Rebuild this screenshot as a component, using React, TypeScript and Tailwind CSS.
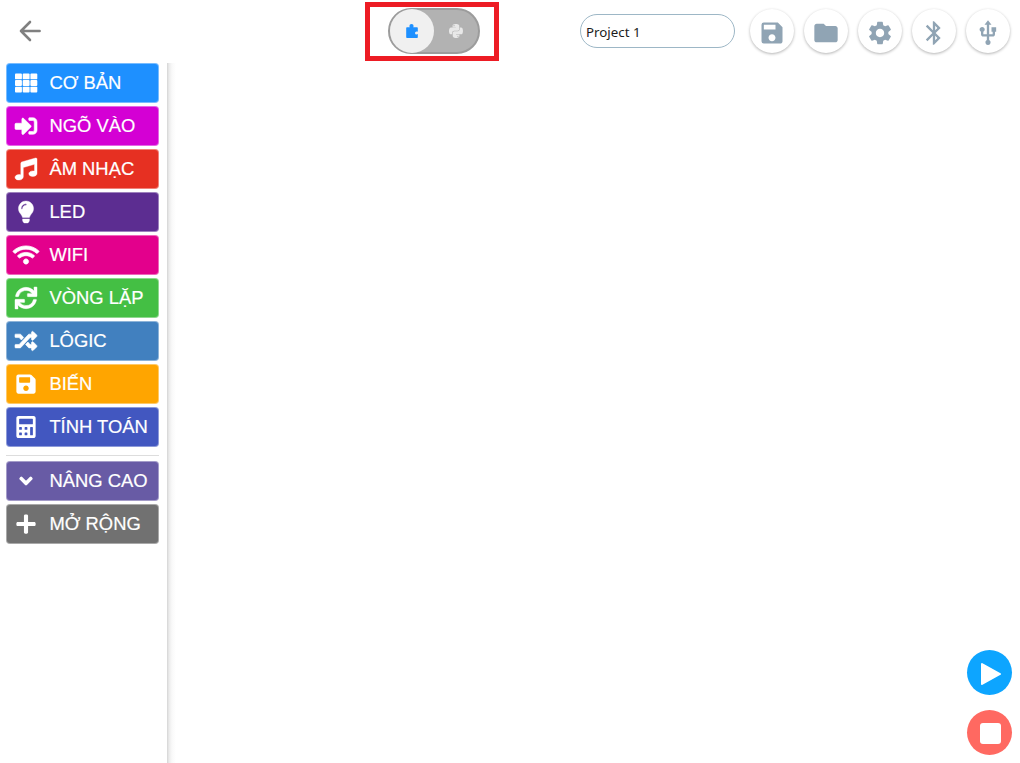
import React from "react";
import type { IconType } from "react-icons";
import {
  FaCalculator,
  FaChevronDown,
  FaLightbulb,
  FaPlus,
  FaPython,
  FaRandom,
  FaSave,
  FaSignInAlt,
  FaSync,
  FaWifi,
} from "react-icons/fa";
import { MdBluetooth, MdFolder, MdSave, MdSettings, MdUsb } from "react-icons/md";

type Icon = IconType | ((props: { className?: string }) => React.ReactElement);
type Category = { label: string; icon: Icon; color: string; size: string };

function GridIcon({ className }: { className?: string }) {
  return (
    <svg viewBox="0 0 22 22" className={className} fill="currentColor">
      {[1.5, 8.1, 14.7].map((y) =>
        [0, 7.7, 15.4].map((x) => <rect key={`${x}-${y}`} x={x} y={y} width="6.9" height="5.8" rx="0.9" />),
      )}
    </svg>
  );
}

function MusicIcon({ className }: { className?: string }) {
  return (
    <svg viewBox="0 0 22 22" className={className} fill="currentColor" stroke="currentColor" strokeWidth="0.4">
      <path d="M5.8 5.2c0-.6.4-1 .9-1.2L20.5 0c.8-.2 1.5.3 1.5 1.1v14.3c0 1.9-1.9 3-4.2 3s-4-1-4-2.6c0-1.7 1.9-2.9 4.2-2.9.6 0 .9.1 1.5.2V6.300L8.300 9.500v9.300c0 1.900-1.900 3.200-4.200 3.200S0 21 0 19.400c0-1.700 1.900-2.900 4.200-2.900.6 0 1.100.1 1.600.3Z" />
    </svg>
  );
}

const categories: Category[] = [
  { label: "CƠ BẢN", icon: GridIcon, color: "bg-[#1e90ff]", size: "size-[22px]" },
  { label: "NGÕ VÀO", icon: FaSignInAlt, color: "bg-[#d400d4]", size: "size-[22px] [stroke-width:14]" },
  { label: "ÂM NHẠC", icon: MusicIcon, color: "bg-[#e63022]", size: "size-[22px]" },
  { label: "LED", icon: FaLightbulb, color: "bg-[#5c2d91]", size: "size-[22px] [stroke-width:8]" },
  { label: "WIFI", icon: FaWifi, color: "bg-[#e3008c]", size: "size-[26px] [stroke-width:18]" },
  { label: "VÒNG LẶP", icon: FaSync, color: "bg-[#44bf44]", size: "size-[22px] [stroke-width:10]" },
  { label: "LÔGIC", icon: FaRandom, color: "bg-[#4180bf]", size: "size-[22px] [stroke-width:14]" },
  { label: "BIẾN", icon: FaSave, color: "bg-[#ffa500]", size: "size-[22px] [stroke-width:0]" },
  { label: "TÍNH TOÁN", icon: FaCalculator, color: "bg-[#4257c0]", size: "size-[22px] [stroke-width:0]" },
];

const extras: Category[] = [
  { label: "NÂNG CAO", icon: FaChevronDown, color: "bg-[#685ba5]", size: "size-[14px] [stroke-width:50]" },
  { label: "MỞ RỘNG", icon: FaPlus, color: "bg-[#717171]", size: "size-[22px] [stroke-width:0]" },
];

const tools: { name: string; icon: IconType }[] = [
  { name: "save", icon: MdSave },
  { name: "folder", icon: MdFolder },
  { name: "settings", icon: MdSettings },
  { name: "bluetooth", icon: MdBluetooth },
  { name: "usb", icon: MdUsb },
];

function CategoryButton({ label, icon: Icon, color, size }: Category) {
  return (
    <button
      className={`flex h-10 w-[153px] shrink-0 items-center rounded-[4px] border border-white/40 pl-[5px] text-white ${color}`}
    >
      <span className="flex w-7 shrink-0 justify-center [&>svg]:shrink-0 [&>svg]:overflow-visible">
        <Icon className={size} />
      </span>
      <span className="ml-[9.4px] whitespace-nowrap text-[18.4px] leading-[38px] [-webkit-text-stroke:0.2px_white]">{label}</span>
    </button>
  );
}

export default function App() {
  return (
    <div className="flex h-[763px] w-[1020px] flex-col overflow-hidden bg-white font-['Liberation_Sans',sans-serif]">
      <header className="flex h-[63px] shrink-0 items-start">
        <button className="ml-[18px] mt-[19px] text-[#808080]">
          <svg viewBox="0 0 24 24" className="size-6" fill="none" stroke="currentColor" strokeWidth="2.6" strokeLinecap="round" strokeLinejoin="round">
            <path d="M21.6 12H3M12 3L3 12l9 9" />
          </svg>
        </button>
        <div className="ml-[323px] mt-[2px] flex h-[59px] w-[134px] items-center justify-center border-[5px] border-[#ed1c24]">
          <div className="mb-[1px] mr-[-4px] flex h-[46px] w-[92px] items-center rounded-full border-2 border-[#9c9c9c] bg-[#b2b2b2]">
            <span className="flex size-11 items-center justify-center rounded-full bg-[#f0f0f0] text-[#1e90ff]">
              <svg viewBox="0 0 12 14" className="h-[14px] w-3" fill="currentColor">
                <path d="M1 3.2h2.8c-.3-.5-.4-.8-.4-1.2a2.1 2 0 0 1 4.2 0c0 .4-.1.7-.4 1.2H11a.8.8 0 0 1 .8.8v3.8c-.4-.3-.8-.4-1.3-.4a1.5 1.5 0 0 0 0 3c.5 0 .9-.1 1.3-.4v3.2a.8.8 0 0 1-.8.8H1a.8.8 0 0 1-.8-.8V4A.8.8 0 0 1 1 3.2Z" />
              </svg>
            </span>
            <span className="flex flex-1 items-center justify-center text-[#e8e8e8]">
              <FaPython className="size-4" />
            </span>
          </div>
        </div>
        <div className="ml-[81px] mt-[14px] flex h-[34px] w-[155px] items-center rounded-full border border-[#9db7c6] pl-[5px] pt-[3px] font-['Noto_Sans',sans-serif] text-[13.3px] text-[#1c1c1c]">
          Project 1
        </div>
        <div className="ml-[15px] mt-[9px] flex gap-[10px]">
          {tools.map(({ name, icon: Icon }) => (
            <button
              key={name}
              aria-label={name}
              className="flex size-11 items-center justify-center rounded-full bg-white pt-[4px] text-[#90a4b4] shadow-[0_1px_3px_rgba(0,0,0,0.3)]"
            >
              <Icon className="size-7" />
            </button>
          ))}
        </div>
      </header>
      <div className="flex min-h-0 flex-1">
        <nav className="flex w-[167px] shrink-0 flex-col gap-[3px] pl-[6px]">
          {categories.map((item) => (
            <CategoryButton key={item.label} {...item} />
          ))}
          <hr className="mb-[2px] mt-[5px] w-[153px] border-t border-[#dddddd]" />
          {extras.map((item) => (
            <CategoryButton key={item.label} {...item} />
          ))}
        </nav>
        <main className="flex flex-1 bg-[linear-gradient(to_right,#d4d4d4_0,#ebebeb_2px,#f9f9f9_5px,#fff_9px)]">
          <div className="ml-auto mr-[8px] mt-auto mb-[8px] flex flex-col gap-[15px]">
            <button aria-label="run" className="flex size-[45px] items-center justify-center rounded-full bg-[#0da5ff] pl-[3px] pt-[2px] text-white">
              <svg viewBox="0 0 20 22" className="h-[22px] w-5" fill="currentColor" stroke="currentColor" strokeWidth="2" strokeLinejoin="round">
                <path d="M1 1L19 11L1 21Z" />
              </svg>
            </button>
            <button aria-label="stop" className="flex size-[45px] items-center justify-center rounded-full bg-[#ff6961] pl-[2px] pt-[2px]">
              <span className="size-[21px] rounded-[3px] bg-white" />
            </button>
          </div>
        </main>
      </div>
    </div>
  );
}
